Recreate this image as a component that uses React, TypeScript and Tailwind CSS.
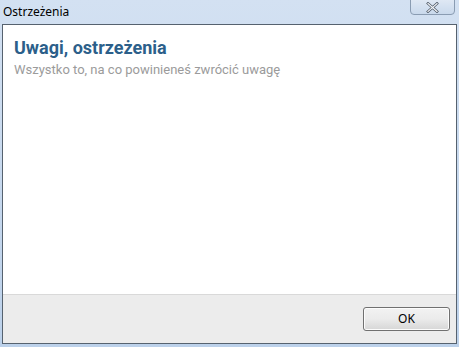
export default function App() {
  return (
    <div className="w-[459px] h-[347px] flex flex-col bg-gradient-to-b from-[#d3e1f2] to-[#bcd1ea] overflow-hidden">
      {/* Title bar */}
      <div className="h-[24px] flex items-start justify-between pl-[3px]">
        <span className="mt-[4px] text-[12px] leading-[15px] text-black" style={{ fontFamily: '"Segoe UI", "Noto Sans", sans-serif' }}>
          Ostrzeżenia
        </span>
        <button className="mr-[4px] w-[45px] h-[16px] -mt-px rounded-b-[4px] border border-[#8a9cb2] bg-gradient-to-b from-[#dfe8f4] to-[#c9d9ec] flex items-center justify-center">
          <svg width="13" height="11" viewBox="0 0 13 11">
            <path d="M2 1.5 L11 9.5 M11 1.5 L2 9.5" stroke="#4a5563" strokeWidth="2.6" strokeLinecap="square" />
            <path d="M2 1.5 L11 9.5 M11 1.5 L2 9.5" stroke="#f4f6f9" strokeWidth="1.2" strokeLinecap="square" />
          </svg>
        </button>
      </div>

      {/* Client area */}
      <div className="flex-1 mx-[2px] mb-[3px] border border-[#56626f] flex flex-col bg-white">
        <div className="flex-1 px-[11px] pt-[11px]" style={{ fontFamily: 'Roboto, "Noto Sans", sans-serif' }}>
          <h1 className="text-[18px] leading-[24px] font-bold text-[#2c5f8a]">Uwagi, ostrzeżenia</h1>
          <p className="mt-[2px] text-[13px] leading-[16px] text-[#9b9b9b]">Wszystko to, na co powinieneś zwrócić uwagę</p>
        </div>
        <div className="h-[49px] bg-[#ececec] border-t border-[#d9d9d9] flex justify-end items-start pr-[6px] pt-[12px]">
          <button
            className="w-[87px] h-[24px] rounded-[3px] border border-[#707070] bg-gradient-to-b from-[#f2f2f2] via-[#ebebeb] to-[#d6d6d6] text-[12px] text-black shadow-[inset_0_0_0_1px_#fcfcfc]"
            style={{ fontFamily: '"Segoe UI", "Noto Sans", sans-serif' }}
          >
            OK
          </button>
        </div>
      </div>
    </div>
  );
}
